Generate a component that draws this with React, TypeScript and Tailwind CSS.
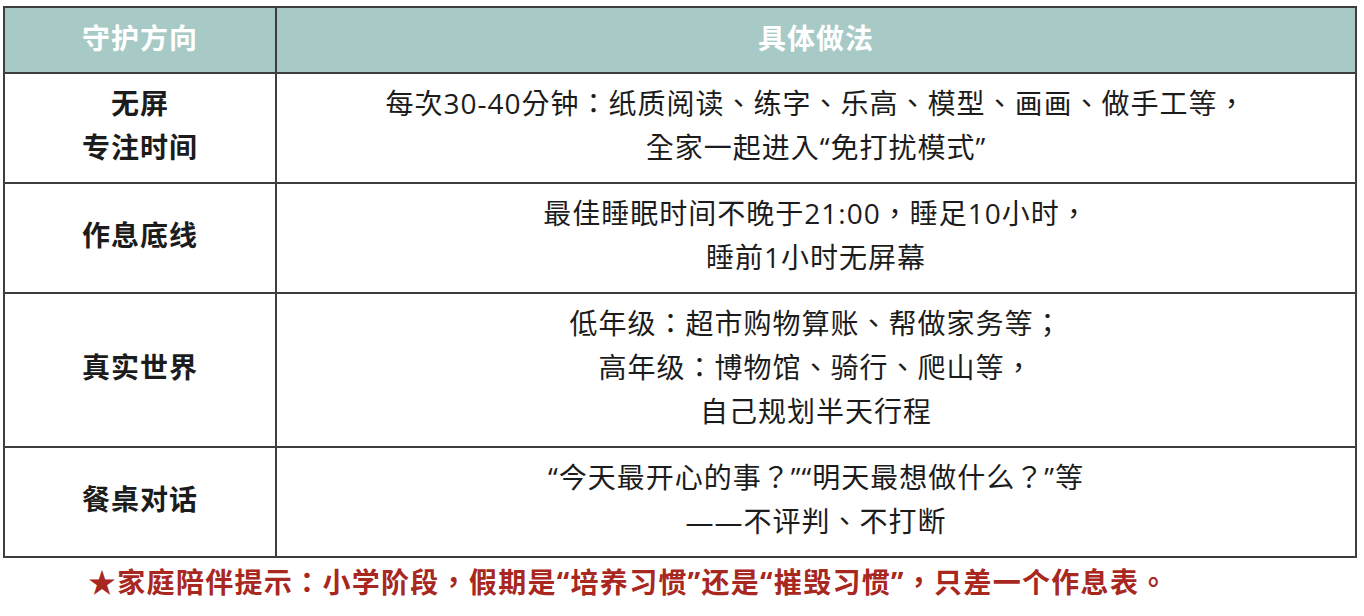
import React from "react";

const font = { fontFamily: '"Open Sans", "Noto Sans CJK TC", "Noto Sans CJK SC", sans-serif' };

const rows: { title: string[]; lines: string[] }[] = [
  {
    title: ["无屏", "专注时间"],
    lines: [
      "每次30-40分钟：纸质阅读、练字、乐高、模型、画画、做手工等，",
      "全家一起进入“免打扰模式”",
    ],
  },
  {
    title: ["作息底线"],
    lines: ["最佳睡眠时间不晚于21:00，睡足10小时，", "睡前1小时无屏幕"],
  },
  {
    title: ["真实世界"],
    lines: [
      "低年级：超市购物算账、帮做家务等；",
      "高年级：博物馆、骑行、爬山等，",
      "自己规划半天行程",
    ],
  },
  {
    title: ["餐桌对话"],
    lines: ["“今天最开心的事？”“明天最想做什么？”等", "——不评判、不打断"],
  },
];

export default function App() {
  return (
    <div className="bg-white w-[1364px] h-[616px] overflow-hidden" style={font}>
      <div className="pt-[6px] pl-[3px]">
        <table className="w-[1354px] border-collapse border-2 border-[#3d3d3d]">
          <thead>
            <tr className="bg-[#a7cac7]">
              <th className="w-[272px] h-[66px] pb-[4px] border-2 border-[#3d3d3d] text-white font-bold text-[28px] tracking-[1px] text-center align-middle">
                守护方向
              </th>
              <th className="h-[66px] pb-[4px] border-2 border-[#3d3d3d] text-white font-bold text-[28px] tracking-[1px] text-center align-middle">
                具体做法
              </th>
            </tr>
          </thead>
          <tbody>
            {rows.map((r, i) => (
              <tr key={i}>
                <td className="border-2 border-[#3d3d3d] text-center align-middle pt-[7px] pb-[13px] text-[28px] leading-[44px] tracking-[1px] font-bold text-[#1c1c1c]">
                  {r.title.map((t, j) => (
                    <div key={j}>{t}</div>
                  ))}
                </td>
                <td className="border-2 border-[#3d3d3d] text-center align-middle pt-[7px] pb-[13px] text-[28px] leading-[44px] tracking-[1px] font-normal text-[#1c1c1c]">
                  {r.lines.map((t, j) => (
                    <div key={j}>{t}</div>
                  ))}
                </td>
              </tr>
            ))}
          </tbody>
        </table>
        <div className="pl-[85px] pt-[6px] text-[28px] leading-[36px] tracking-[1.3px] font-bold text-[#a8271f]">
          ★家庭陪伴提示：小学阶段，假期是“培养习惯”还是“摧毁习惯”，只差一个作息表。
        </div>
      </div>
    </div>
  );
}
